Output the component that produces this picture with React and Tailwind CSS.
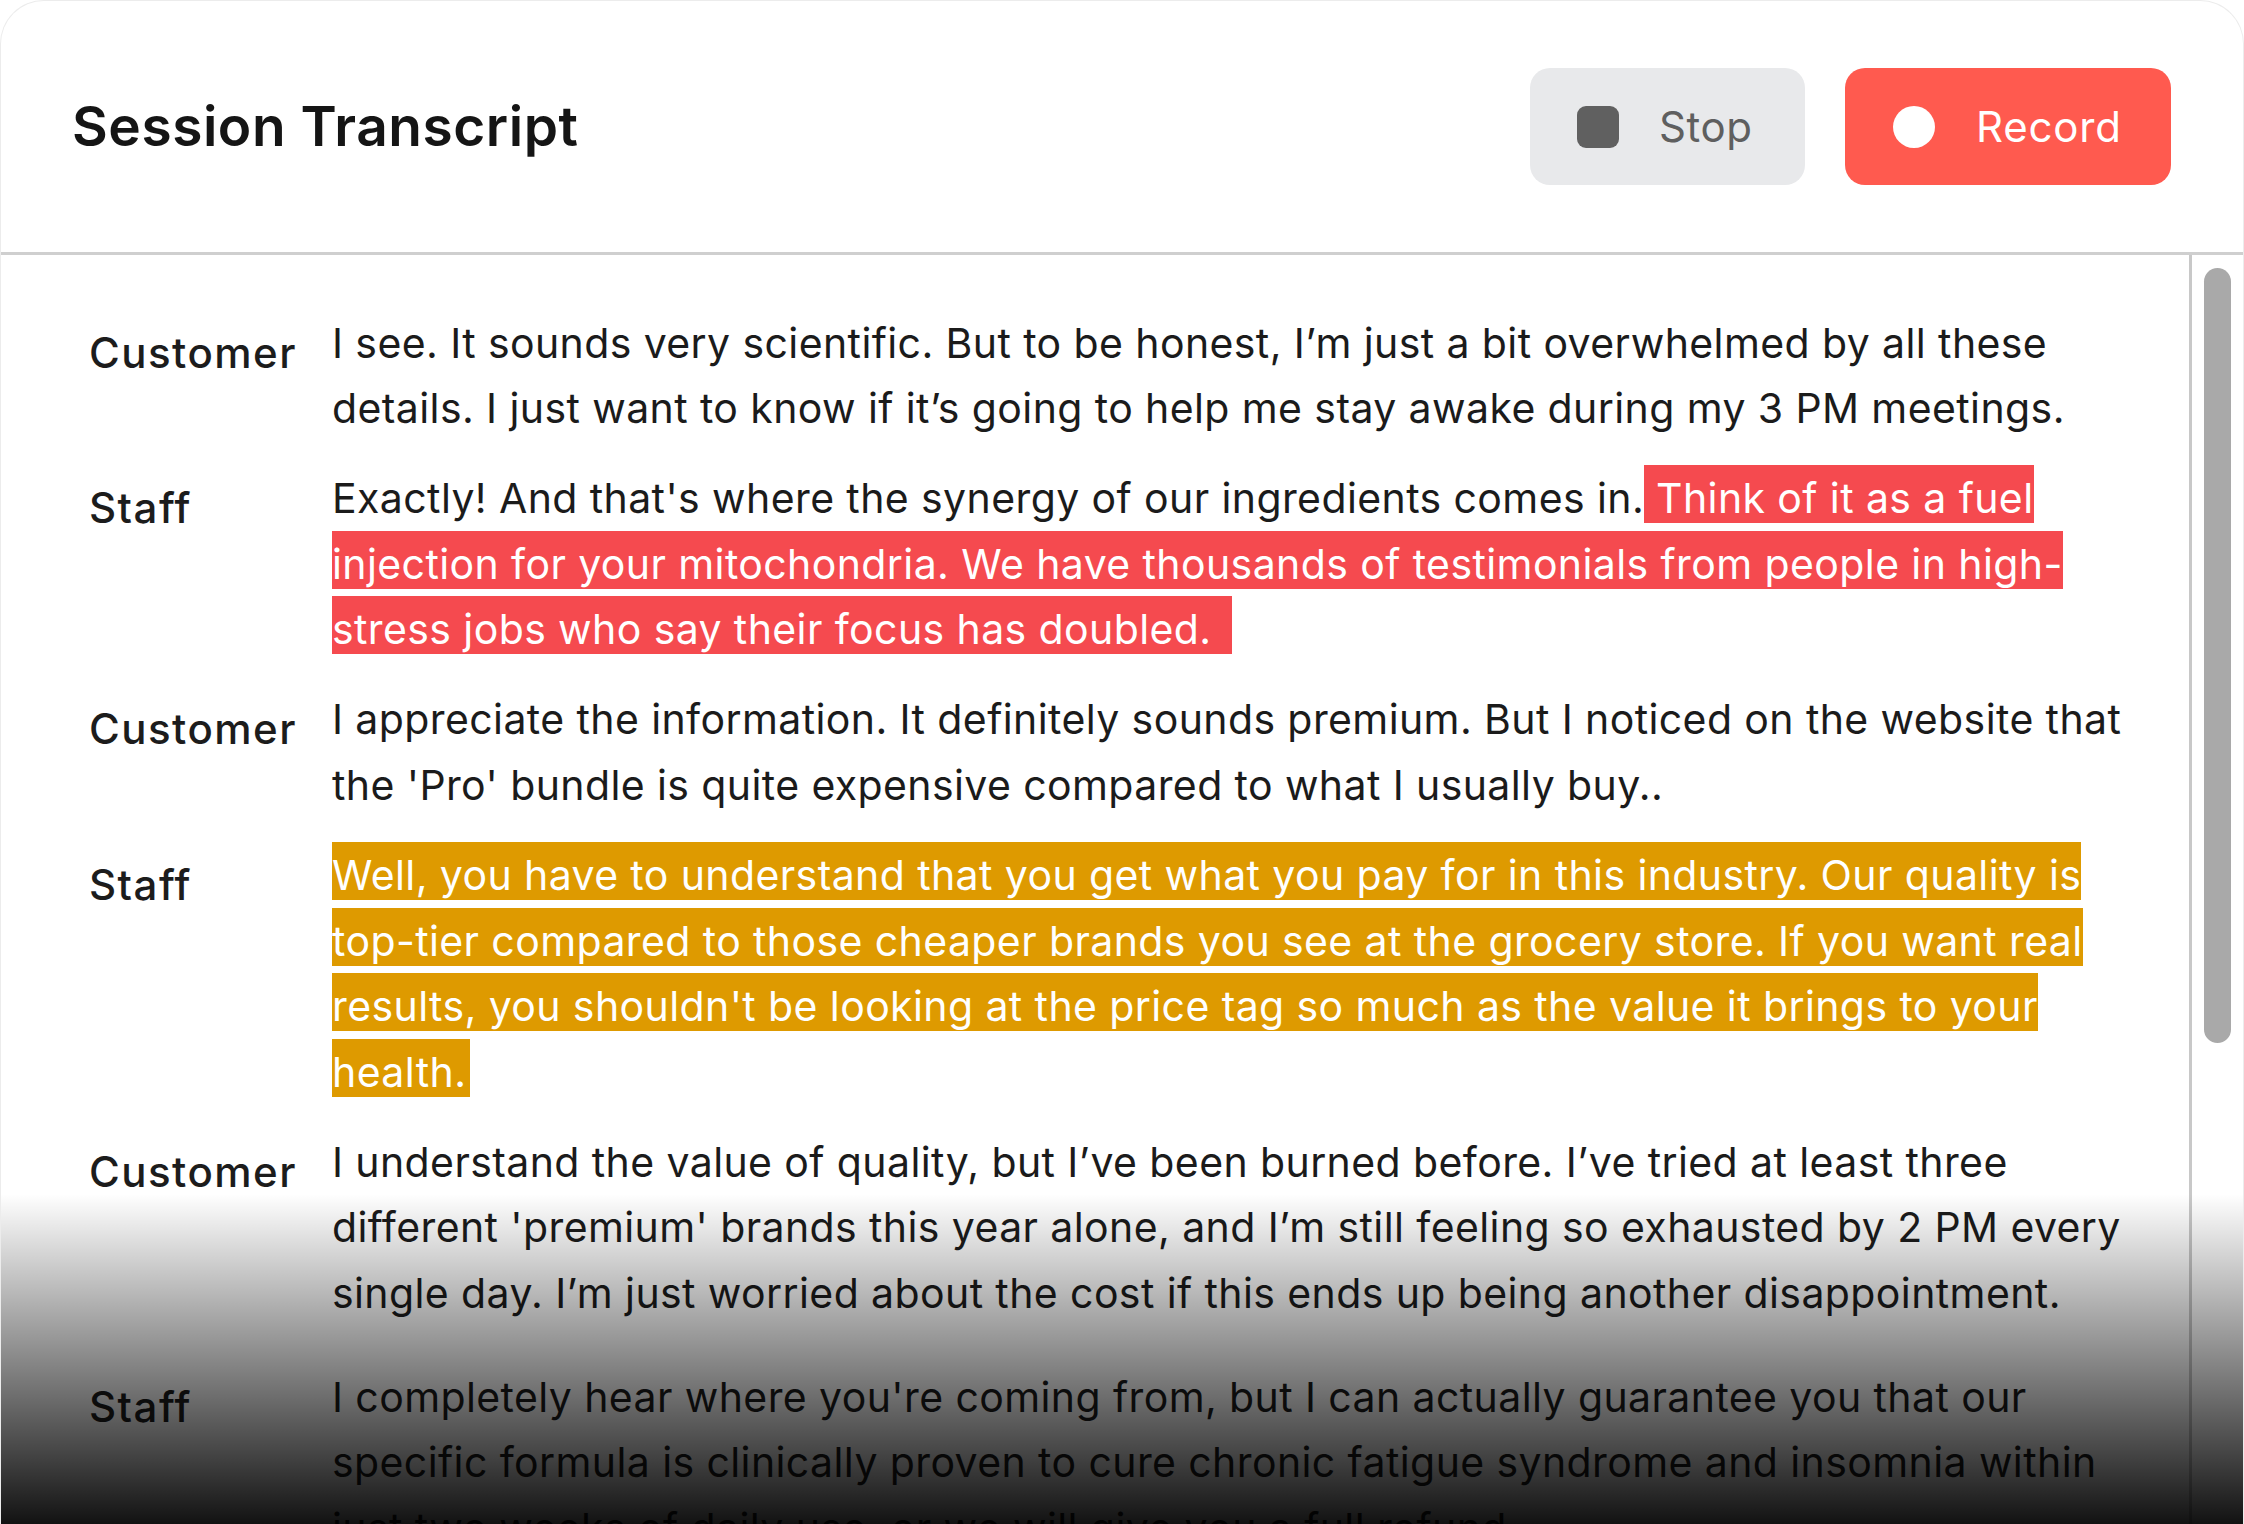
import React from 'react';

const messages = [
  {
    speaker: 'Customer',
    parts: [
      {
        text: 'I see. It sounds very scientific. But to be honest, I’m just a bit overwhelmed by all these details. I just want to know if it’s going to help me stay awake during my 3 PM meetings.',
      },
    ],
  },
  {
    speaker: 'Staff',
    parts: [
      { text: "Exactly! And that's where the synergy of our ingredients comes in." },
      {
        text: ' Think of it as a fuel injection for your mitochondria. We have thousands of testimonials from people in high-stress jobs who say their focus has doubled.',
        tone: 'red',
      },
    ],
  },
  {
    speaker: 'Customer',
    parts: [
      {
        text: "I appreciate the information. It definitely sounds premium. But I noticed on the website that the 'Pro' bundle is quite expensive compared to what I usually buy..",
      },
    ],
  },
  {
    speaker: 'Staff',
    parts: [
      {
        text: "Well, you have to understand that you get what you pay for in this industry. Our quality is top-tier compared to those cheaper brands you see at the grocery store. If you want real results, you shouldn't be looking at the price tag so much as the value it brings to your health.",
        tone: 'amber',
      },
    ],
  },
  {
    speaker: 'Customer',
    parts: [
      {
        text: "I understand the value of quality, but I’ve been burned before. I’ve tried at least three different 'premium' brands this year alone, and I’m still feeling so exhausted by 2 PM every single day. I’m just worried about the cost if this ends up being another disappointment.",
      },
    ],
  },
  {
    speaker: 'Staff',
    extra: true,
    parts: [
      {
        text: "I completely hear where you're coming from, but I can actually guarantee you that our specific formula is clinically proven to cure chronic fatigue syndrome and insomnia within just two weeks of daily use, or we will give you a full refund.",
      },
    ],
  },
];

const Part = ({ part }) => {
  if (part.tone === 'red') {
    return <span className="bg-[#f54a4f] text-white pt-[8px] pr-[20px]">{part.text}</span>;
  }
  if (part.tone === 'amber') {
    return <span className="bg-[#de9a00] text-white pt-[8px] pr-[4px]">{part.text}</span>;
  }
  return <span>{part.text}</span>;
};

const Row = ({ msg }) => (
  <div className={`flex items-start ${msg.extra ? 'pt-[14px]' : ''}`}>
    <div className="w-[243px] shrink-0 pt-[9px] text-[42px] leading-[66px] font-medium text-[#1c1c1c] tracking-[0.035em]">
      {msg.speaker}
    </div>
    <p className="flex-1 text-[41px] leading-[65.6px] tracking-[0.4px] text-[#1b1b1b]">
      {msg.parts.map((part, idx) => (
        <Part key={idx} part={part} />
      ))}
    </p>
  </div>
);

export default function App() {
  return (
    <div className="h-[1524px] w-full bg-white font-[Inter,sans-serif] overflow-hidden">
      <div className="h-full flex flex-col rounded-t-[44px] border-x border-t border-[#ececec] overflow-hidden">
        {/* header */}
        <header className="h-[254px] shrink-0 flex items-center justify-between pl-[71px] pr-[72px] border-b-[3px] border-[#cfcfcf]">
          <h1 className="text-[55px] font-semibold text-[#151515] tracking-[0.01em]">
            Session Transcript
          </h1>
          <div className="flex items-center gap-[40px]">
            <button className="h-[117px] w-[275px] flex items-center gap-[40px] pl-[47px] rounded-[20px] bg-[#e8e9eb]">
              <span className="w-[42px] h-[42px] rounded-[9px] bg-[#606060]" />
              <span className="text-[42px] tracking-[0.6px] text-[#5f5f5f]">Stop</span>
            </button>
            <button className="h-[117px] w-[326px] flex items-center gap-[41px] pl-[48px] rounded-[20px] bg-[#ff5a4f]">
              <span className="w-[42px] h-[42px] rounded-full bg-white" />
              <span className="text-[42px] tracking-[0.8px] text-white">Record</span>
            </button>
          </div>
        </header>

        {/* transcript */}
        <div className="relative flex-1 flex overflow-hidden">
          <div className="flex-1 flex flex-col gap-[24.4px] pt-[55.6px] pl-[88px] pr-[40px]">
            {messages.map((msg, idx) => (
              <Row key={idx} msg={msg} />
            ))}
          </div>
          <div className="w-[54px] shrink-0 border-l-[3px] border-[#c8c8c8] pt-[13px] pl-[12px]">
            <div className="w-[27px] h-[775px] rounded-full bg-[#a9a9a9]" />
          </div>
          <div className="pointer-events-none absolute inset-x-0 bottom-0 h-[330px] bg-linear-to-b from-transparent to-[rgba(0,0,0,0.93)]" />
        </div>
      </div>
    </div>
  );
}
